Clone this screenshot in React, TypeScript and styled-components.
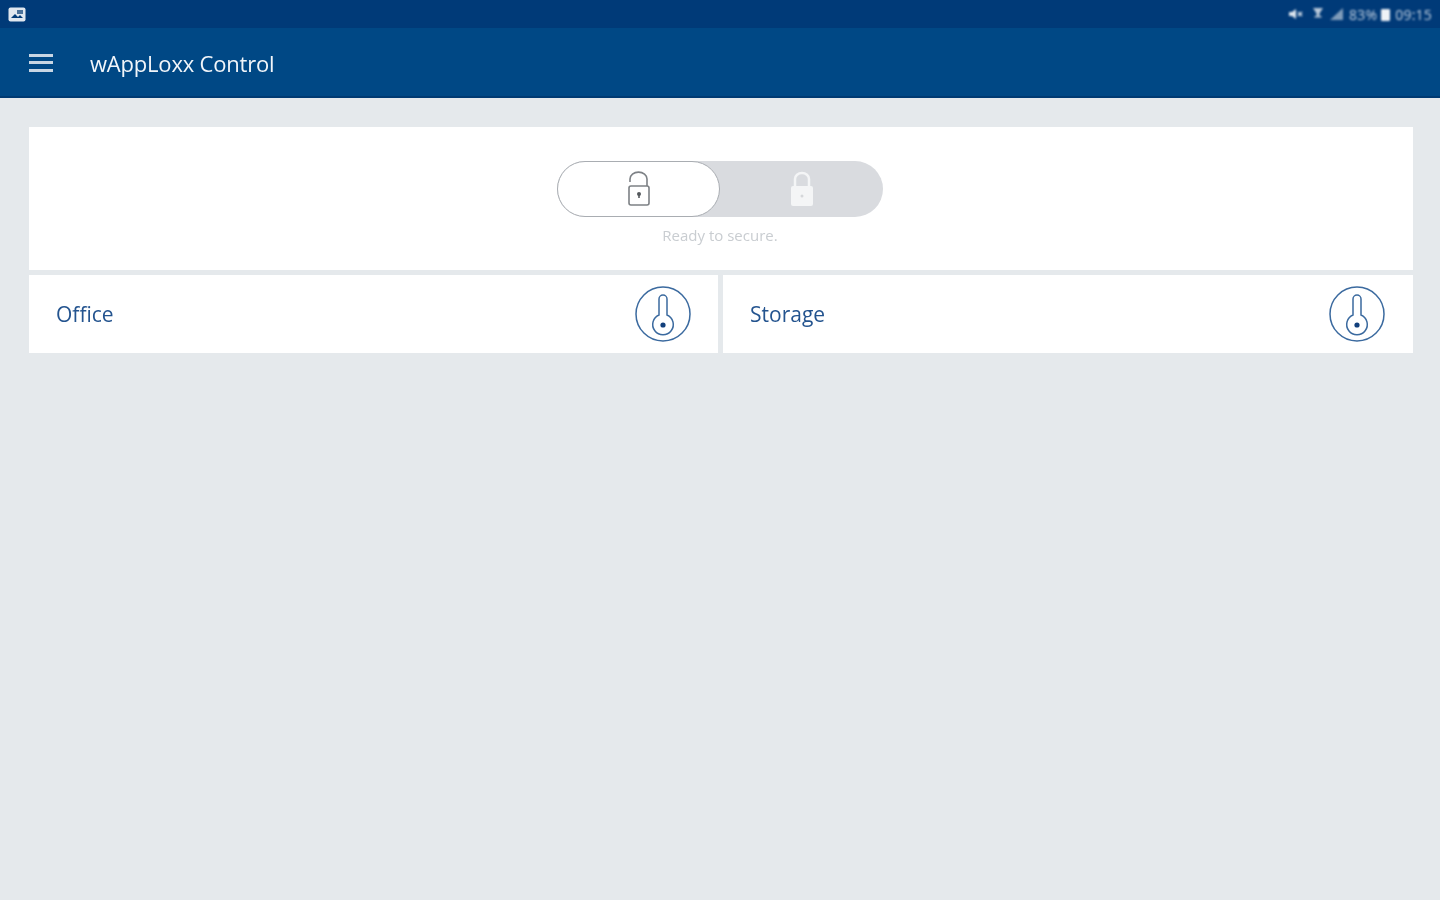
import React, { FC } from "react";
import styled, { createGlobalStyle } from "styled-components";

const GlobalStyle = createGlobalStyle`
  html, body {
    margin: 0;
    padding: 0;
    height: 100%;
    background-color: #e5e9ec;
    font-family: "Open Sans", "Liberation Sans", sans-serif;
  }
`;

const Page = styled.div`
  width: 1440px;
  height: 900px;
  overflow: hidden;
  display: flex;
  flex-direction: column;
  background-color: #e5e9ec;
`;

const StatusBar = styled.div`
  height: 28px;
  padding: 0 8px;
  display: flex;
  align-items: center;
  justify-content: space-between;
  background-color: #003a78;
  color: #c3d2e2;
`;

const StatusRight = styled.div`
  display: flex;
  align-items: center;
  filter: blur(0.8px);
`;

const StatusText = styled.span<{ $gap: number }>`
  font-size: 14px;
  letter-spacing: 0.2px;
  margin-left: ${(props) => props.$gap}px;
`;

const StatusIcon = styled.span<{ $gap?: number }>`
  display: flex;
  margin-left: ${(props) => props.$gap ?? 0}px;
`;

const PictureIcon = styled.span`
  display: flex;
  filter: blur(0.7px);
`;

const AppBar = styled.header`
  height: 67px;
  padding: 1px 0 0 29px;
  display: flex;
  align-items: center;
  background-color: #004885;
  border-bottom: 2px solid #003a72;
`;

const MenuButton = styled.button`
  width: 24px;
  height: 18px;
  padding: 0;
  border: none;
  display: flex;
  flex-direction: column;
  justify-content: space-between;
  background-color: transparent;
  filter: blur(0.7px);

  span {
    height: 3px;
    background-color: #c8d6e4;
  }
`;

const Title = styled.h1`
  margin: 0 0 0 37px;
  font-size: 22px;
  font-weight: 400;
  letter-spacing: -0.2px;
  color: #f2f6fa;
  filter: blur(0.7px);
`;

const Content = styled.main`
  padding: 29px 27px 0 29px;
  display: flex;
  flex-direction: column;
  gap: 5px;
`;

const LockCard = styled.section`
  height: 143px;
  padding: 34px 2px 0 0;
  box-sizing: border-box;
  display: flex;
  flex-direction: column;
  align-items: center;
  background-color: #fff;
`;

const Toggle = styled.div`
  width: 326px;
  height: 56px;
  display: flex;
  border-radius: 28px;
  background-color: #d9dbdf;
`;

const ToggleSide = styled.div<{ $active?: boolean }>`
  width: 163px;
  box-sizing: border-box;
  display: flex;
  align-items: center;
  justify-content: center;
  border-radius: 28px;
  background-color: ${(props) => (props.$active ? "#fff" : "transparent")};
  border: ${(props) => (props.$active ? "1.5px solid #a9adb2" : "none")};

  svg {
    filter: blur(0.6px);
  }
`;

const Hint = styled.p`
  margin: 9px 0 0;
  font-size: 15px;
  line-height: 19px;
  color: #c9cdd1;
  filter: blur(0.7px);
`;

const DoorGrid = styled.div`
  display: grid;
  grid-template-columns: 689px 690px;
  gap: 5px;
`;

const DoorCard = styled.div`
  height: 78px;
  padding: 0 28px 0 27px;
  display: flex;
  align-items: center;
  justify-content: space-between;
  background-color: #fff;

  &:first-child {
    padding-right: 27px;
  }

  svg {
    filter: blur(0.6px);
  }
`;

const DoorName = styled.span`
  font-size: 21px;
  font-variant-ligatures: none;
  color: #24548f;
  filter: blur(0.7px);
`;

const LockIcon: FC<{ closed?: boolean }> = ({ closed }) =>
  closed ? (
    <svg width="24" height="36" viewBox="0 0 24 36">
      <path d="M5 15V8a7 6 0 0 1 14 0v7" fill="none" stroke="#f4f5f6" strokeWidth="2.5" />
      <rect x="1" y="15" width="22" height="20" rx="2" fill="#f4f5f6" />
      <circle cx="12" cy="25" r="1.5" fill="#d5d7da" />
    </svg>
  ) : (
    <svg width="24" height="36" viewBox="0 0 24 36">
      <path d="M3 11V8a8 6.500 0 0 1 17 0v7" fill="none" stroke="#7d8185" strokeWidth="1.6" />
      <rect x="2" y="15" width="20" height="19" rx="2" fill="#fff" stroke="#7d8185" strokeWidth="1.6" />
      <circle cx="12" cy="23" r="2" fill="#55595d" />
      <path d="M12 23v4" stroke="#55595d" strokeWidth="1.6" />
    </svg>
  );

const KeyIcon: FC = () => (
  <svg width="56" height="56" viewBox="0 0 56 56">
    <circle cx="28" cy="28" r="27" fill="#fff" stroke="#3b6a9f" strokeWidth="1.5" />
    <path
      d="M24 29V13a4 4 0 0 1 8 0v16a10.300 10.300 0 1 1-8 0z"
      fill="none"
      stroke="#3b6a9f"
      strokeWidth="1.5"
    />
    <circle cx="28" cy="39" r="2.6" fill="#123f7c" />
  </svg>
);

const doors = ["Office", "Storage"];

const App: FC = () => (
  <Page>
    <GlobalStyle />
    <StatusBar>
      <PictureIcon>
        <svg width="18" height="15" viewBox="0 0 18 15">
          <rect x="0.5" y="0.5" width="17" height="14" rx="2" fill="#dfe7ef" />
          <path d="M3 11l4-4 3 3 2-2 3 3z" fill="#003a78" />
          <rect x="9" y="3" width="6" height="4" fill="#4a7199" />
        </svg>
      </PictureIcon>
      <StatusRight>
        <StatusIcon>
          <svg width="16" height="12" viewBox="0 0 16 12">
            <path d="M1 4h3l4-3v10L4 8H1z" fill="#dfe7ef" />
            <path d="M10 4l4 4M14 4l-4 4" stroke="#dfe7ef" strokeWidth="1.5" />
          </svg>
        </StatusIcon>
        <StatusIcon $gap={8}>
          <svg width="12" height="14" viewBox="0 0 12 14">
            <path d="M1 1h10L7.500 6.500V9h2v1.500h-7V9h2V6.500z" fill="#b9c9da" />
          </svg>
        </StatusIcon>
        <StatusIcon $gap={6}>
          <svg width="13" height="12" viewBox="0 0 13 12">
            <path d="M0 12L13 0v12z" fill="#7f9cba" />
          </svg>
        </StatusIcon>
        <StatusText $gap={6}>83%</StatusText>
        <StatusIcon $gap={4}>
          <svg width="9" height="13" viewBox="0 0 9 13">
            <rect y="1" width="9" height="12" rx="1" fill="#eef3f7" />
          </svg>
        </StatusIcon>
        <StatusText $gap={5}>09:15</StatusText>
      </StatusRight>
    </StatusBar>
    <AppBar>
      <MenuButton type="button">
        <span />
        <span />
        <span />
      </MenuButton>
      <Title>wAppLoxx Control</Title>
    </AppBar>
    <Content>
      <LockCard>
        <Toggle>
          <ToggleSide $active>
            <LockIcon />
          </ToggleSide>
          <ToggleSide>
            <LockIcon closed />
          </ToggleSide>
        </Toggle>
        <Hint>Ready to secure.</Hint>
      </LockCard>
      <DoorGrid>
        {doors.map((door) => (
          <DoorCard key={door}>
            <DoorName>{door}</DoorName>
            <KeyIcon />
          </DoorCard>
        ))}
      </DoorGrid>
    </Content>
  </Page>
);

export default App;
